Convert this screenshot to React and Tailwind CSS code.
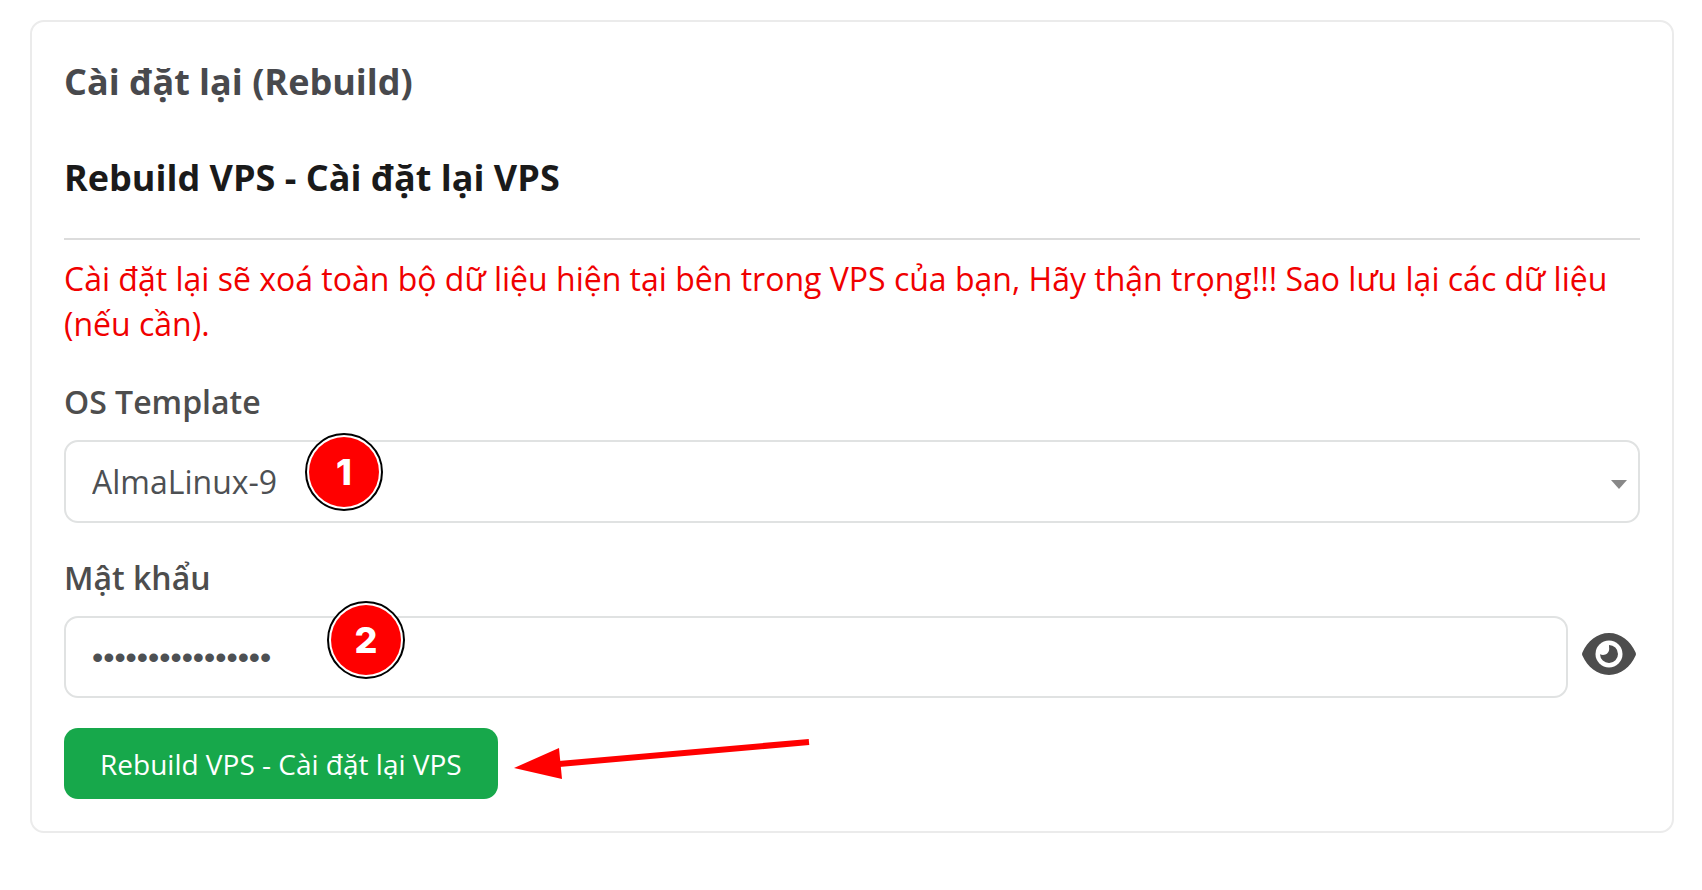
import React, { useState } from 'react'

const templates = ['AlmaLinux-9', 'AlmaLinux-8', 'Ubuntu-22.04', 'Debian-12']

const StepBadge = ({ number, className }) => (
    <span
        className={`pointer-events-none absolute flex h-[78px] w-[78px] items-center justify-center rounded-full border-2 border-black bg-white p-[2px] ${className}`}
    >
        <span className="flex h-full w-full items-center justify-center rounded-full bg-[#ff0000] font-['Inter',sans-serif] text-[36px] font-extrabold leading-none text-white">
            {number}
        </span>
    </span>
)

const EyeIcon = () => (
    <svg viewBox="0 0 54 42" className="h-[42px] w-[54px]" aria-hidden="true">
        <path
            d="M.5 19.2C5.5 8.2 15.2 0 27 0s21.5 8.2 26.5 19.2c.6 1.2.6 2.4 0 3.6C48.5 33.8 38.8 42 27 42S5.5 33.8.5 22.8c-.6-1.2-.6-2.4 0-3.6z"
            fill="#4d4d4d"
        />
        <circle cx="27" cy="21" r="13.5" fill="#fff" />
        <path
            d="M27 12a9 9 0 1 1-9 9.3c1 .5 2 .7 3 .7 3.500 0 6.200-2.700 6.200-6.200 0-1.300-.3-2.700-.2-3.800z"
            fill="#4d4d4d"
        />
    </svg>
)

const PointerArrow = () => (
    <svg
        viewBox="0 0 298 42"
        className="pointer-events-none absolute left-full top-[11px] ml-[15px] h-[42px] w-[298px]"
        aria-hidden="true"
    >
        <path d="M46 25L296 3" stroke="#ff0000" strokeWidth="6" />
        <path d="M1 29L46 9L49 40z" fill="#ff0000" />
    </svg>
)

const App = () => {
    const [template, setTemplate] = useState(templates[0])
    const [password, setPassword] = useState('aB3dE5gH7jK9mN1p')
    const [showPassword, setShowPassword] = useState(false)

    return (
        <div className="bg-white pt-5 pl-[30px] pr-[28px] font-['Open_Sans','Noto_Sans',sans-serif] text-[#4d4d4d]">
            <div className="rounded-[14px] border-2 border-[#ebebeb] p-8">
                <h1 className="text-[36px] font-bold leading-[56px] text-[#48494d]">
                    Cài đặt lại (Rebuild)
                </h1>
                <h2 className="mt-[45px] text-[36px] font-bold leading-[46px] text-[#1a1a1a]">
                    Rebuild VPS - Cài đặt lại VPS
                </h2>
                <hr className="mt-[37px] border-t-2 border-[#dcdcdc]" />
                <p className="mt-4 text-[32px] leading-[45px] text-[#f00000]">
                    Cài đặt lại sẽ xoá toàn bộ dữ liệu hiện tại bên trong VPS của bạn, Hãy thận trọng!!! Sao lưu lại các dữ liệu (nếu cần).
                </p>

                <form onSubmit={(e) => e.preventDefault()}>
                    <label htmlFor="os-template" className="mt-8 block text-[32px] font-semibold leading-[48px]">
                        OS Template
                    </label>
                    <div className="relative mt-[14px]">
                        <select
                            id="os-template"
                            value={template}
                            onChange={(e) => setTemplate(e.target.value)}
                            className="block h-[83px] w-full appearance-none rounded-[14px] border-2 border-[#e0e2e2] bg-white px-[26px] text-[32px] text-[#4d5053]"
                        >
                            {templates.map(name => (
                                <option key={name} value={name}>{name}</option>
                            ))}
                        </select>
                        <svg
                            viewBox="0 0 16 9"
                            className="pointer-events-none absolute right-[13px] top-[40px] h-[9px] w-4"
                            aria-hidden="true"
                        >
                            <path d="M0 0h16L8 9z" fill="#888888" />
                        </svg>
                        <StepBadge number="1" className="left-[241px] top-[-7px]" />
                    </div>

                    <label htmlFor="password" className="mt-[31px] block text-[32px] font-semibold leading-[48px]">
                        Mật khẩu
                    </label>
                    <div className="relative mt-[14px] flex items-start gap-[14px]">
                        <input
                            id="password"
                            type={showPassword ? 'text' : 'password'}
                            value={password}
                            onChange={(e) => setPassword(e.target.value)}
                            className="h-[82px] min-w-0 flex-1 rounded-[14px] border-2 border-[#e0e2e2] bg-white px-[26px] font-['Liberation_Sans',sans-serif] text-[32px] text-[#4d5053]"
                        />
                        <button
                            type="button"
                            aria-label="Hiện mật khẩu"
                            onClick={() => setShowPassword(!showPassword)}
                            className="mt-[17px] mr-1 shrink-0"
                        >
                            <EyeIcon />
                        </button>
                        <StepBadge number="2" className="left-[263px] top-[-15px]" />
                    </div>

                    <div className="relative mt-[30px] w-fit">
                        <button
                            type="submit"
                            className="block h-[71px] rounded-[14px] bg-[#17a84b] px-9 text-[28px] font-medium text-white"
                        >
                            Rebuild VPS - Cài đặt lại VPS
                        </button>
                        <PointerArrow />
                    </div>
                </form>
            </div>
        </div>
    )
}

export default App
